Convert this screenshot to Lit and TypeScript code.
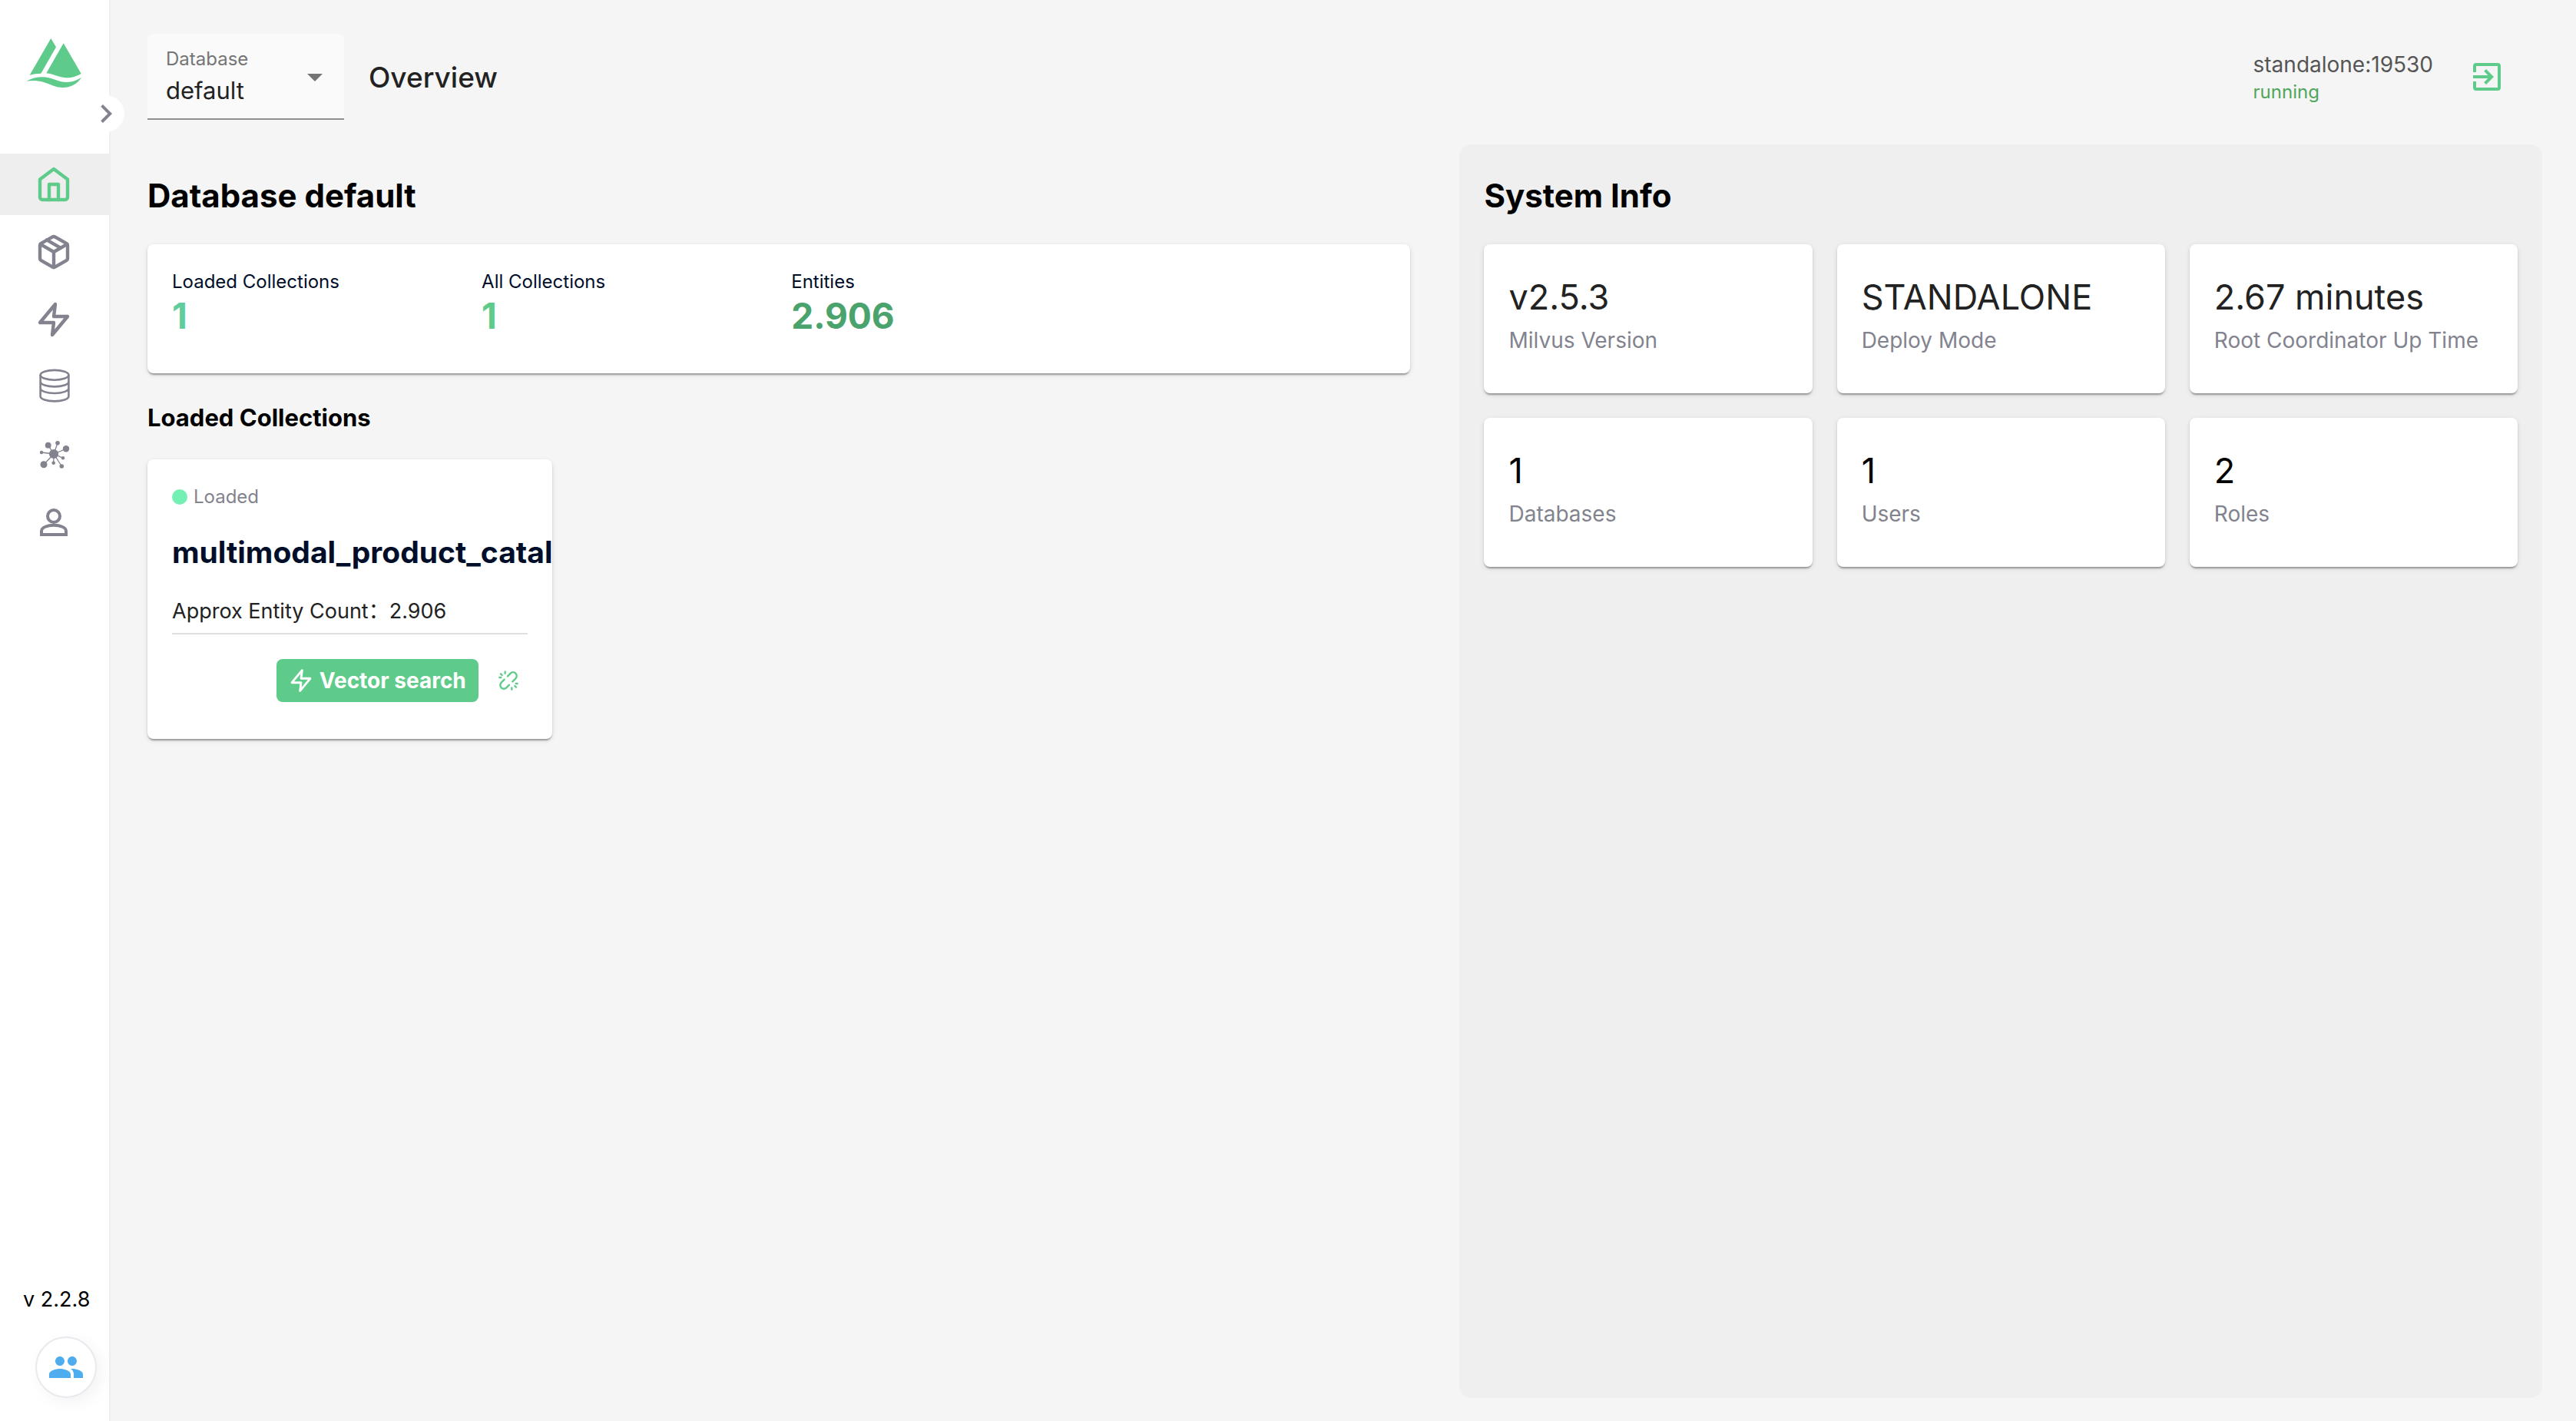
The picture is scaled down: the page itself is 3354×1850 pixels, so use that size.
import { LitElement, html, css, svg } from "lit";
import { customElement } from "lit/decorators.js";

const home = svg`<path d="M3 8.800 12 2l9 6.800V20.400a1.600 1.600 0 0 1-1.600 1.600H4.600A1.600 1.600 0 0 1 3 20.400z"/><path d="M9 22V12h6v10"/>`;
const cube = svg`<path d="M21 16V8a2 2 0 0 0-1-1.730l-7-4a2 2 0 0 0-2 0l-7 4A2 2 0 0 0 3 8v8a2 2 0 0 0 1 1.730l7 4a2 2 0 0 0 2 0l7-4A2 2 0 0 0 21 16z"/><path d="M3.270 6.960 12 12l8.730-5.040M12 22.080V12M7.500 4.210l9 5.190"/>`;
const bolt = svg`<path d="M13 2 3 14h9l-1 8 10-12h-9z"/>`;

interface NavItem { label: string; icon: unknown; active?: boolean; }

const NAV: NavItem[] = [
  { label: "Overview", active: true, icon: html`<svg class="icon line" viewBox="0 0 24 24">${home}</svg>` },
  { label: "Databases", icon: html`<svg class="icon line" viewBox="0 0 24 24">${cube}</svg>` },
  { label: "Search", icon: html`<svg class="icon line" viewBox="0 0 24 24">${bolt}</svg>` },
  { label: "System", icon: html`<svg class="icon thin" viewBox="0 0 48 48">
      <ellipse cx="25" cy="8.300" rx="18.400" ry="6.400"/><path d="M6.600 8.300V36c0 3.500 8.200 6.400 18.400 6.400S43.400 39.500 43.400 36V8.300M6.600 17c0 3.500 8.200 6.400 18.400 6.400S43.400 20.500 43.400 17M6.600 25.600c0 3.500 8.200 6.400 18.400 6.400s18.400-2.900 18.400-6.400"/></svg>` },
  { label: "Topology", icon: html`<svg class="icon solid" viewBox="0 0 48 48">
      <path class="spokes" d="M24 23 16.700 11.700M24 23l5-14.300M24 23l16-6.700M24 23 8 21M24 23 11 36.700M24 23l-.300 11.700M24 23l10.300 16M24 23l12 5.300"/>
      <circle cx="24" cy="23" r="6.100"/><circle cx="16.700" cy="11.700" r="3.900"/><circle cx="29" cy="8.700" r="2.800"/><circle cx="40" cy="16.300" r="4.200"/><circle cx="8" cy="21" r="2.200"/><circle cx="11" cy="36.700" r="4.500"/><circle cx="23.700" cy="34.700" r="2.300"/><circle cx="34.300" cy="39" r="2.800"/><circle cx="36" cy="28.300" r="2.200"/></svg>` },
  { label: "Users", icon: html`<svg class="icon person" viewBox="0 0 48 48"><circle cx="24" cy="16" r="8"/><path d="M8 40v-4.500C8 30.500 16 27.800 24 27.800s16 2.700 16 7.700V40z"/></svg>` },
];

const STATS = [
  { label: "Loaded Collections", value: "1", tone: "mint" },
  { label: "All Collections", value: "1", tone: "green" },
  { label: "Entities", value: "2.906", tone: "deep" },
];

const SYSTEM = [
  { value: "v2.5.3", label: "Milvus Version" },
  { value: "STANDALONE", label: "Deploy Mode" },
  { value: "2.67 minutes", label: "Root Coordinator Up Time" },
  { value: "1", label: "Databases", count: true },
  { value: "1", label: "Users", count: true },
  { value: "2", label: "Roles", count: true },
];

@customElement("app-root")
export class AppRoot extends LitElement {
  static styles = css`
    :host {
      display: flex;
      min-height: 100vh;
      background: #f5f5f5;
      color: #222;
      font-family: Inter, "Noto Sans CJK SC", sans-serif;
      font-size: 28px;
      line-height: 40px;
    }
    * { box-sizing: border-box; }
    button { font: inherit; color: inherit; border: 0; padding: 0; background: none; cursor: pointer; }
    h1, h2, h3 { margin: 0; }
    svg { display: block; flex: none; }

    .sidebar {
      position: relative;
      flex: none;
      display: flex;
      flex-direction: column;
      width: 144px;
      padding: 44px 0 30px;
      background: #fff;
      border-right: 2px solid #eee;
    }
    .logo { width: 72px; height: 72px; margin-left: 34px; fill: #5fcb8a; }
    .expand {
      position: absolute;
      top: 124px;
      left: 114px;
      display: grid;
      place-items: center;
      width: 48px;
      height: 48px;
      border-radius: 50%;
      background: #fff;
    }
    .chevron { width: 48px; height: 48px; fill: #82838e; }
    nav { display: flex; flex-direction: column; gap: 8px; margin: 84px -2px 0 0; }
    .nav-item { display: flex; align-items: center; height: 80px; padding-left: 46px; color: #82838e; }
    .active { background: #eee; color: #5fcb8a; }
    .icon { width: 48px; height: 48px; }
    .line { fill: none; stroke: currentColor; stroke-width: 2.2; stroke-linecap: round; stroke-linejoin: round; }
    .thin { fill: none; stroke: currentColor; stroke-width: 2.6; }
    .solid { fill: currentColor; }
    .spokes { stroke: currentColor; stroke-width: 1.3; }
    .person { fill: none; stroke: currentColor; stroke-width: 4; }
    .version { margin-top: auto; padding-left: 30px; font-size: 27px; color: #000; }
    .people {
      display: grid;
      place-items: center;
      width: 80px;
      height: 80px;
      margin: 28px 0 0 46px;
      border: 2px solid #e9e9ef;
      border-radius: 50%;
      background: #fff;
      box-shadow: 6px 6px 20px rgba(0, 0, 0, 0.05);
    }
    .people-icon { width: 48px; height: 48px; fill: #4eadee; }

    .page { flex: 1; min-width: 0; display: flex; flex-direction: column; padding: 0 44px 30px 48px; }
    header { display: flex; align-items: center; gap: 32px; padding: 44px 48px 32px 0; }
    .db { position: relative; width: 256px; }
    .db-label { position: absolute; top: 17px; left: 24px; font-size: 24px; line-height: 32px; color: #757575; pointer-events: none; }
    .db-select {
      display: block;
      width: 100%;
      height: 112px;
      padding: 38px 64px 0 24px;
      appearance: none;
      border: 0;
      border-bottom: 2px solid #8f8f8f;
      border-radius: 8px 8px 0 0;
      background: #fafafa;
      color: #222;
      font: inherit;
      font-size: 31px;
    }
    .caret { position: absolute; top: 32px; right: 14px; width: 48px; height: 48px; fill: #757575; pointer-events: none; }
    h1 { padding-top: 2px; font-size: 37px; line-height: 48px; font-weight: 500; }
    .server { margin-left: auto; color: #555; }
    .status { font-size: 24px; line-height: 32px; color: #4fa65c; }
    .logout { margin-left: 14px; }
    .logout-icon { width: 48px; height: 48px; fill: #5fcb8a; }

    main { flex: 1; display: grid; grid-template-columns: 7fr 6fr; gap: 64px; }
    .overview, .system { min-width: 0; padding-top: 36px; }
    .system { padding-left: 32px; padding-right: 32px; border-radius: 16px; background: #efefef; }
    h2 { font-size: 42px; line-height: 62px; font-weight: 700; color: #000; }
    h3 { font-size: 31px; line-height: 48px; font-weight: 700; color: #000; margin: 34px 0 30px; }
    .card {
      padding: 33px 32px 32px;
      border-radius: 8px;
      background: #fff;
      box-shadow: 0 4px 2px -2px rgba(0, 0, 0, 0.2), 0 2px 2px rgba(0, 0, 0, 0.14), 0 2px 6px rgba(0, 0, 0, 0.12);
    }
    .stats { display: grid; grid-template-columns: repeat(4, 1fr); gap: 32px; height: 168px; margin-top: 32px; }
    .stat-label { font-size: 24px; line-height: 32px; color: #010e29; }
    .stat-value { font-size: 46px; line-height: 56px; font-weight: 700; }
    .mint { color: #60cd9e; }
    .green { color: #5fcb8a; }
    .deep { color: #4aa36c; }

    .collections { display: grid; grid-template-columns: repeat(3, 1fr); gap: 32px; }
    .collection { height: 364px; padding-top: 32px; overflow: hidden; }
    .loaded { display: flex; align-items: center; gap: 8px; font-size: 24px; line-height: 34px; color: #82838e; }
    .dot { width: 20px; height: 20px; border-radius: 50%; background: #74f0b4; }
    .name { display: block; margin: 31px 0 33px; font-size: 39px; line-height: 48px; font-weight: 700; color: #010e29; text-decoration: none; white-space: nowrap; }
    .count { display: flex; padding-bottom: 8px; border-bottom: 2px solid #dfdfdf; font-size: 27px; }
    .actions { display: flex; align-items: center; justify-content: flex-end; gap: 26px; margin-top: 32px; padding-right: 12px; }
    .search { display: flex; align-items: center; gap: 8px; height: 56px; padding: 0 16px; border-radius: 8px; background: #5fcb8a; color: #fff; font-weight: 700; }
    .search-icon { width: 32px; height: 32px; }
    .unlink { color: #5fcb8a; }
    .unlink-icon { width: 26px; height: 26px; fill: none; stroke: currentColor; stroke-width: 7; stroke-linecap: round; stroke-linejoin: round; }
    .tiles { display: grid; grid-template-columns: repeat(3, 1fr); gap: 32px; margin-top: 32px; }
    .tile { height: 194px; }
    .tile-value { font-size: 45px; line-height: 72px; }
    .tile-count { color: #000; }
    .tile-label { color: #82838e; }
  `;

  render() {
    return html`
      <aside class="sidebar">
        <svg class="logo" viewBox="0 0 72 72">
          <path d="M32.300 6 39 17.300 19.300 51.700Q11 51.700 4.700 53.700z"/>
          <path d="M48.700 12.300 71.700 52Q62 57.600 52.700 57.300C43 57 36 52.400 26.300 51.300z"/>
          <path d="M.300 61.700C7 57.800 14 56.300 21 56.300 33 56.300 41 63 52.700 63 60 63 67 60 72 57 67 64.500 59 70 48 70 37 70 31 65 22.700 63 15 61 8 60.600.300 61.700z"/>
        </svg>
        <button class="expand" aria-label="Expand menu"><svg class="chevron" viewBox="0 0 24 24"><path d="M10 6 8.590 7.410 13.170 12l-4.580 4.590L10 18l6-6z"/></svg></button>
        <nav>${NAV.map((n) => html`<button class="nav-item ${n.active ? "active" : ""}" aria-label=${n.label}>${n.icon}</button>`)}</nav>
        <div class="version">v 2.2.8</div>
        <button class="people" aria-label="Community"><svg class="people-icon" viewBox="0 0 24 24"><path d="M16 11c1.660 0 2.990-1.340 2.990-3S17.660 5 16 5s-3 1.340-3 3 1.340 3 3 3zm-8 0c1.660 0 2.990-1.340 2.990-3S9.660 5 8 5 5 6.340 5 8s1.340 3 3 3zm0 2c-2.330 0-7 1.170-7 3.500V19h14v-2.500c0-2.330-4.670-3.500-7-3.500zm8 0c-.290 0-.620.020-.970.050 1.160.840 1.970 1.970 1.970 3.450V19h6v-2.500c0-2.330-4.670-3.500-7-3.500z"/></svg></button>
      </aside>
      <div class="page">
        <header>
          <div class="db">
            <label class="db-label" for="db">Database</label>
            <select class="db-select" id="db"><option>default</option></select>
            <svg class="caret" viewBox="0 0 24 24"><path d="m7 10 5 5 5-5z"/></svg>
          </div>
          <h1>Overview</h1>
          <div class="server"><div>standalone:19530</div><div class="status">running</div></div>
          <button class="logout" aria-label="Disconnect"><svg class="logout-icon" viewBox="0 0 24 24"><path d="M10.090 15.590 11.500 17l5-5-5-5-1.410 1.410L12.670 11H3v2h9.670l-2.580 2.590zM19 3H5a2 2 0 0 0-2 2v4h2V5h14v14H5v-4H3v4a2 2 0 0 0 2 2h14a2 2 0 0 0 2-2V5a2 2 0 0 0-2-2z"/></svg></button>
        </header>
        <main>
          <section class="overview">
            <h2>Database default</h2>
            <div class="card stats">
              ${STATS.map((s) => html`<div><div class="stat-label">${s.label}</div><div class="stat-value ${s.tone}">${s.value}</div></div>`)}
            </div>
            <h3>Loaded Collections</h3>
            <div class="collections">
              <article class="card collection">
                <div class="loaded"><span class="dot"></span>Loaded</div>
                <a class="name" href="#collection">multimodal_product_catalog</a>
                <div class="count"><span>Approx Entity Count：</span><span>2.906</span></div>
                <div class="actions">
                  <button class="search"><svg class="search-icon line" viewBox="0 0 24 24">${bolt}</svg>Vector search</button>
                  <button class="unlink" aria-label="Release"><svg class="unlink-icon" viewBox="0 0 78 78"><path d="M36 22 47 11A14 14 0 0 1 67 31L55 43M42 56 31 67A14 14 0 0 1 11 47L23 35M26 4v7M9 13l5 5M4 27h6M52 74v-7M69 65l-5-5M74 51h-6"/></svg></button>
                </div>
              </article>
            </div>
          </section>
          <section class="system">
            <h2>System Info</h2>
            <div class="tiles">
              ${SYSTEM.map((s) => html`<div class="card tile"><div class="tile-value ${s.count ? "tile-count" : ""}">${s.value}</div><div class="tile-label">${s.label}</div></div>`)}
            </div>
          </section>
        </main>
      </div>
    `;
  }
}
